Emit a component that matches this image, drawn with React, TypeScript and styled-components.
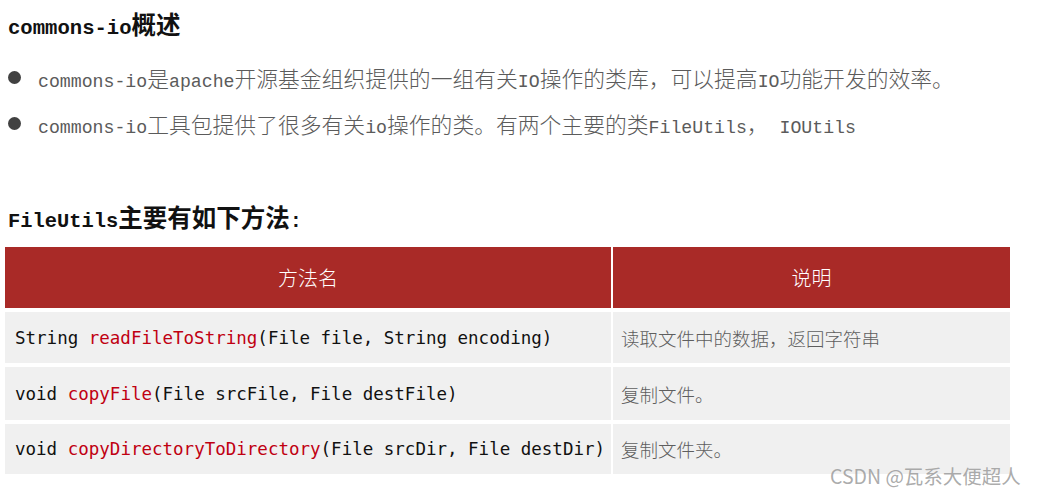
import React from 'react';
import styled, { createGlobalStyle } from 'styled-components';

const GlobalStyle = createGlobalStyle`
  html, body {
    margin: 0;
    padding: 0;
    background: #ffffff;
  }
`;

const CJK = '"Noto Sans CJK SC", "Noto Sans", sans-serif';

const overview = [
  'commons-io是apache开源基金组织提供的一组有关IO操作的类库，可以提高IO功能开发的效率。',
  'commons-io工具包提供了很多有关io操作的类。有两个主要的类FileUtils， IOUtils',
];

const methods = [
  {
    ret: 'String',
    name: 'readFileToString',
    args: '(File file, String encoding)',
    desc: '读取文件中的数据，返回字符串',
  },
  { ret: 'void', name: 'copyFile', args: '(File srcFile, File destFile)', desc: '复制文件。' },
  {
    ret: 'void',
    name: 'copyDirectoryToDirectory',
    args: '(File srcDir, File destDir)',
    desc: '复制文件夹。',
  },
];

const ASCII_RUN = /^[\x20-\x7e]+$/;

// SimSun-style text: latin half width, cjk full width
function Mixed({ text, size }: { text: string; size: number }) {
  const parts = text.split(/([\x20-\x7e]+)/).filter(Boolean);
  return (
    <>
      {parts.map((part, i) =>
        ASCII_RUN.test(part) ? (
          <Latin key={i} $size={size}>
            {part}
          </Latin>
        ) : (
          <span key={i}>{part}</span>
        ),
      )}
    </>
  );
}

export default function App() {
  return (
    <>
      <GlobalStyle />
      <Page>
        <Heading>
          <Mixed text="commons-io概述" size={20.6} />
        </Heading>
        <BulletList>
          {overview.map((line) => (
            <BulletItem key={line}>
              <Dot />
              <BulletText>
                <Mixed text={line} size={18.2} />
              </BulletText>
            </BulletItem>
          ))}
        </BulletList>

        <SubHeading>
          <Mixed text="FileUtils主要有如下方法:" size={20.4} />
        </SubHeading>

        <Table>
          <HeadCell>方法名</HeadCell>
          <HeadCell>说明</HeadCell>
          {methods.map((m) => (
            <React.Fragment key={m.name}>
              <CodeCell>
                {m.ret} <MethodName>{m.name}</MethodName>
                {m.args}
              </CodeCell>
              <DescCell>{m.desc}</DescCell>
            </React.Fragment>
          ))}
        </Table>

        <Watermark>CSDN @瓦系大便超人</Watermark>
      </Page>
    </>
  );
}

const Page = styled.div`
  position: relative;
  width: 1037px;
  height: 496px;
  overflow: hidden;
`;

const Latin = styled.span<{ $size: number }>`
  font-family: 'Liberation Mono', monospace;
  font-size: ${(p) => p.$size}px;
`;

const Heading = styled.h2`
  height: 30px;
  margin: 9px 0 0 8px;
  font-family: ${CJK};
  font-size: 24.5px;
  line-height: 30px;
  font-weight: 700;
  color: #111;
  white-space: nowrap;
`;

const BulletList = styled.ul`
  list-style: none;
  margin: 15px 0 0 8px;
  padding: 0;
`;

const BulletItem = styled.li`
  display: flex;
  align-items: center;
  height: 46px;
`;

const Dot = styled.span`
  width: 13px;
  height: 13px;
  border-radius: 50%;
  background: #414141;
  margin-right: 17px;
  flex-shrink: 0;
`;

const BulletText = styled.span`
  font-family: ${CJK};
  font-size: 21.8px;
  font-weight: 300;
  color: #5b5b5b;
  white-space: nowrap;
`;

const SubHeading = styled.h3`
  height: 30px;
  margin: 56px 0 0 8px;
  font-family: ${CJK};
  font-size: 24.5px;
  line-height: 30px;
  font-weight: 700;
  color: #111;
  white-space: nowrap;
`;

const Table = styled.div`
  display: grid;
  grid-template-columns: 606px 397px;
  grid-template-rows: 61px 51px 53px 50px;
  gap: 4px 2px;
  margin: 15px 0 0 5px;
`;

const HeadCell = styled.div`
  display: flex;
  align-items: center;
  justify-content: center;
  background: #a92a27;
  color: #ffffff;
  font-family: ${CJK};
  font-size: 20px;
  font-weight: 300;
`;

const CodeCell = styled.div`
  display: flex;
  align-items: center;
  padding-left: 10px;
  background: #f0f0f0;
  font-family: 'DejaVu Sans Mono', 'Liberation Mono', monospace;
  font-size: 17.5px;
  color: #111;
  white-space: pre;
`;

const MethodName = styled.span`
  color: #c00012;
`;

const DescCell = styled.div`
  display: flex;
  align-items: center;
  padding-left: 8px;
  background: #f0f0f0;
  font-family: ${CJK};
  font-size: 18.5px;
  font-weight: 300;
  color: #5e5e5e;
`;

const Watermark = styled.div`
  position: absolute;
  left: 830px;
  top: 461px;
  font-family: ${CJK};
  font-size: 19.5px;
  color: rgba(150, 150, 150, 0.8);
  white-space: nowrap;
`;
